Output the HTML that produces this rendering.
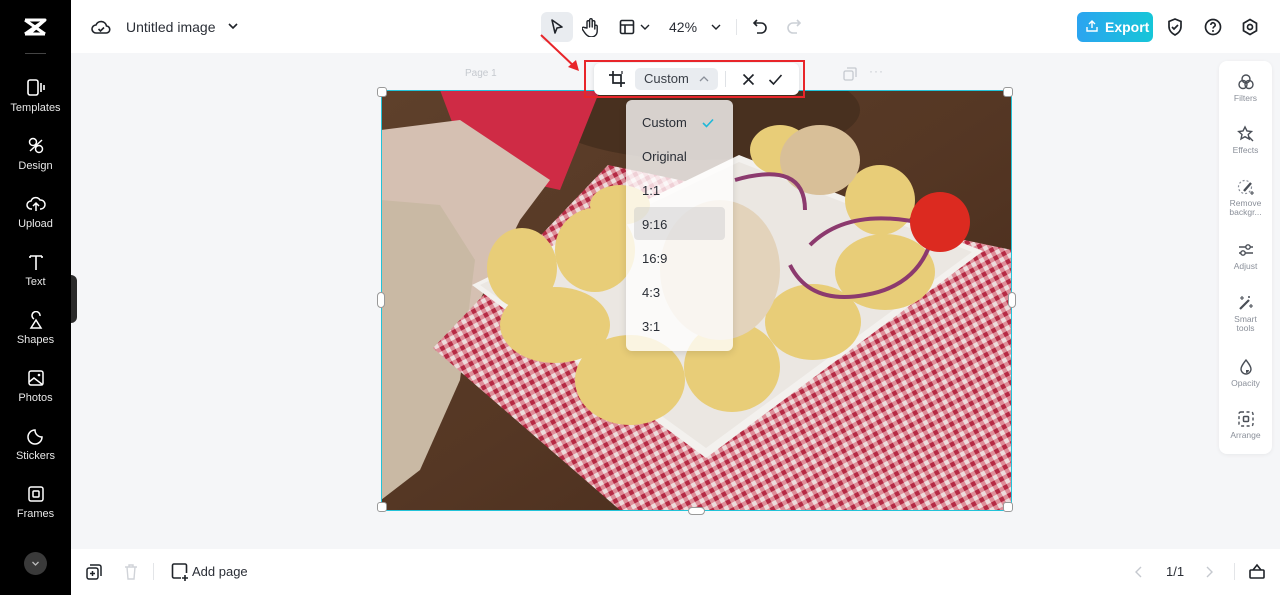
<!DOCTYPE html>
<html><head><meta charset="utf-8">
<style>
*{margin:0;padding:0;box-sizing:border-box}
body{width:1280px;height:595px;overflow:hidden;background:#f5f6f8;font-family:"Liberation Sans",sans-serif;position:relative;color:#1f2329}
.side{position:absolute;left:0;top:0;width:71px;height:595px;background:#000;color:#fff}
.side .it{position:absolute;left:0;width:71px;text-align:center;font-size:11px;color:#e8e8e8}
.side .it svg{display:block;margin:0 auto 5px}
.top{position:absolute;left:71px;top:0;right:0;height:53px;background:#fff}
.bot{position:absolute;left:71px;top:549px;right:0;height:46px;background:#fff}
.rp{position:absolute;left:1219px;top:61px;width:53px;height:393px;background:#fff;border-radius:8px;box-shadow:0 1px 4px rgba(0,0,0,.06)}
.rp .it{position:absolute;left:0;width:53px;text-align:center;font-size:8.5px;color:#8a8f99;line-height:9px}
.rp .it svg{display:block;margin:0 auto 3px}
.dd{position:absolute;left:626px;top:100px;width:107px;height:251px;background:rgba(255,255,255,.78);border-radius:6px;box-shadow:0 2px 8px rgba(0,0,0,.12)}
.dd div{position:absolute;left:16px;font-size:13px;color:#2a2e36}
</style></head><body>

<div class="side">
  <svg style="position:absolute;left:22px;top:17px" width="26" height="20" viewBox="0 0 26 20"><path d="M3 3h20L7 17h16M3 17h4M19 3" fill="none" stroke="#fff" stroke-width="3" stroke-linejoin="round"/><path d="M3 3l10 7 10-7M3 17l10-7 10 7" fill="none" stroke="#fff" stroke-width="3"/></svg>
  <div style="position:absolute;left:25px;top:53px;width:21px;height:1px;background:#444"></div>
  <div class="it" style="top:79px"><svg width="20" height="18" viewBox="0 0 20 18"><rect x="2" y="1" width="10" height="15" rx="2" fill="none" stroke="#fff" stroke-width="1.6"/><path d="M15 4v9M18 6v5" stroke="#fff" stroke-width="1.6"/></svg>Templates</div>
  <div class="it" style="top:137px"><svg width="20" height="18" viewBox="0 0 20 18"><circle cx="7" cy="5" r="3.5" fill="none" stroke="#fff" stroke-width="1.5"/><circle cx="13" cy="12" r="3.5" fill="none" stroke="#fff" stroke-width="1.5"/><path d="M4 14l12-11" stroke="#fff" stroke-width="1.5"/></svg>Design</div>
  <div class="it" style="top:195px"><svg width="20" height="18" viewBox="0 0 20 18"><path d="M6 14H5a4 4 0 010-8 5 5 0 019-1 4 4 0 011 9h-1M10 16V8M7 11l3-3 3 3" fill="none" stroke="#fff" stroke-width="1.5"/></svg>Upload</div>
  <div class="it" style="top:253px"><svg width="20" height="18" viewBox="0 0 20 18"><path d="M4 3h12M10 3v14M4 3v2M16 3v2" fill="none" stroke="#fff" stroke-width="1.6"/></svg>Text</div>
  <div class="it" style="top:311px"><svg width="20" height="18" viewBox="0 0 20 18"><path d="M8 8a4 4 0 116-3M10 9l-5 8h10z" fill="none" stroke="#fff" stroke-width="1.5"/></svg>Shapes</div>
  <div class="it" style="top:369px"><svg width="20" height="18" viewBox="0 0 20 18"><rect x="3" y="2" width="14" height="14" rx="2" fill="none" stroke="#fff" stroke-width="1.5"/><path d="M3 13l5-4 9 7" fill="none" stroke="#fff" stroke-width="1.5"/><circle cx="13" cy="6" r="1.3" fill="#fff"/></svg>Photos</div>
  <div class="it" style="top:427px"><svg width="20" height="18" viewBox="0 0 20 18"><path d="M16 10a7 7 0 11-7-7c0 4 3 7 7 7z" fill="none" stroke="#fff" stroke-width="1.5"/></svg>Stickers</div>
  <div class="it" style="top:485px"><svg width="20" height="18" viewBox="0 0 20 18"><rect x="3" y="2" width="14" height="14" rx="2" fill="none" stroke="#fff" stroke-width="1.5"/><rect x="7" y="6" width="6" height="6" rx="1" fill="none" stroke="#fff" stroke-width="1.5"/></svg>Frames</div>
  <div style="position:absolute;left:24px;top:552px;width:23px;height:23px;border-radius:50%;background:#3a3a3a"><svg width="23" height="23" viewBox="0 0 23 23"><path d="M8.5 10l3 3 3-3" fill="none" stroke="#bbb" stroke-width="1.3"/></svg></div>
  <div style="position:absolute;left:71px;top:275px;width:6px;height:48px;background:#2a2a2a;border-radius:0 6px 6px 0"></div>
</div>

<div class="top">
  <svg style="position:absolute;left:20px;top:18px" width="20" height="18" viewBox="0 0 20 18"><path d="M5 15a4 4 0 010-8 5.5 5.5 0 0110.5 1A3.5 3.5 0 0115 15z" fill="none" stroke="#1f2329" stroke-width="1.6"/><path d="M7.5 11l2 2 3.5-3.5" fill="none" stroke="#1f2329" stroke-width="1.6"/></svg>
  <div style="position:absolute;left:55px;top:19px;font-size:14px;color:#2a2e36">Untitled image</div>
  <svg style="position:absolute;left:157px;top:22px" width="10" height="8" viewBox="0 0 10 8"><path d="M1 2l4 4 4-4" fill="none" stroke="#1f2329" stroke-width="1.6"/></svg>
  <div style="position:absolute;left:470px;top:12px;width:32px;height:30px;background:#e9ecf0;border-radius:6px"></div>
  <svg style="position:absolute;left:478px;top:18px" width="16" height="18" viewBox="0 0 16 18"><path d="M3 2l10 7-5 1-2 5z" fill="none" stroke="#1f2329" stroke-width="1.6" stroke-linejoin="round"/></svg>
  <svg style="position:absolute;left:511px;top:17px" width="18" height="20" viewBox="0 0 18 20"><path d="M5 11V5a1.3 1.3 0 012.6 0v5V3a1.3 1.3 0 012.6 0v7-5a1.3 1.3 0 012.6 0v7-3a1.3 1.3 0 012.4 0v5c0 4-3 6-6 6s-5-2-7-5l-2-3a1.3 1.3 0 012-1.5z" fill="none" stroke="#1f2329" stroke-width="1.4" stroke-linejoin="round"/></svg>
  <svg style="position:absolute;left:548px;top:19px" width="16" height="16" viewBox="0 0 16 16"><rect x="1.5" y="1.5" width="13" height="13" rx="1.5" fill="none" stroke="#1f2329" stroke-width="1.6"/><path d="M1.5 6h13M6 6v8.5" stroke="#1f2329" stroke-width="1.6"/></svg>
  <svg style="position:absolute;left:569px;top:23px" width="10" height="8" viewBox="0 0 10 8"><path d="M1 2l4 4 4-4" fill="none" stroke="#1f2329" stroke-width="1.4"/></svg>
  <div style="position:absolute;left:598px;top:19px;font-size:14px;color:#2a2e36">42%</div>
  <svg style="position:absolute;left:640px;top:23px" width="10" height="8" viewBox="0 0 10 8"><path d="M1 2l4 4 4-4" fill="none" stroke="#1f2329" stroke-width="1.4"/></svg>
  <div style="position:absolute;left:665px;top:19px;width:1px;height:16px;background:#e3e5e8"></div>
  <svg style="position:absolute;left:681px;top:18px" width="16" height="18" viewBox="0 0 16 18"><path d="M5 2L2 5l3 3M2 5h7a5 5 0 010 10H5" fill="none" stroke="#1f2329" stroke-width="1.6"/></svg>
  <svg style="position:absolute;left:715px;top:18px" width="16" height="18" viewBox="0 0 16 18"><path d="M11 2l3 3-3 3M14 5H7a5 5 0 000 10h4" fill="none" stroke="#ccd0d6" stroke-width="1.6"/></svg>
  <div style="position:absolute;left:1006px;top:12px;width:76px;height:30px;border-radius:6px;background:linear-gradient(90deg,#2ba4f0,#16c6d8);color:#fff;font-size:14px;font-weight:bold;line-height:30px;padding-left:28px">Export</div>
  <svg style="position:absolute;left:1014px;top:19px" width="14" height="14" viewBox="0 0 14 14"><path d="M7 9V2M4 5l3-3 3 3M2 8v4h10V8" fill="none" stroke="#fff" stroke-width="1.4"/></svg>
  <svg style="position:absolute;left:1095px;top:17px" width="18" height="20" viewBox="0 0 18 20"><path d="M9 2l6 2.5v5c0 4-3 7-6 8.5-3-1.5-6-4.5-6-8.5v-5z" fill="none" stroke="#1f2329" stroke-width="1.7"/><path d="M6 10l2 2 4-4" fill="none" stroke="#1f2329" stroke-width="1.7"/></svg>
  <svg style="position:absolute;left:1133px;top:18px" width="18" height="18" viewBox="0 0 18 18"><circle cx="9" cy="9" r="7.5" fill="none" stroke="#1f2329" stroke-width="1.7"/><path d="M6.8 7a2.2 2.2 0 114 1.2c-.8.7-1.8 1-1.8 2.3" fill="none" stroke="#1f2329" stroke-width="1.6"/><circle cx="9" cy="13" r="1" fill="#1f2329"/></svg>
  <svg style="position:absolute;left:1170px;top:18px" width="18" height="18" viewBox="0 0 18 18"><path d="M9 1.5l6.5 3.75v7.5L9 16.5l-6.5-3.75v-7.5z" fill="none" stroke="#1f2329" stroke-width="1.7"/><circle cx="9" cy="9" r="2.5" fill="none" stroke="#1f2329" stroke-width="1.7"/></svg>
</div>

<div style="position:absolute;left:465px;top:68px;font-size:10px;color:#c5c9cf">Page 1</div>
<svg style="position:absolute;left:843px;top:67px" width="14" height="14" viewBox="0 0 14 14"><rect x="1" y="4" width="9" height="9" rx="1.5" fill="none" stroke="#c5c9cf" stroke-width="1.3"/><path d="M4 1h8a1 1 0 011 1v8" fill="none" stroke="#c5c9cf" stroke-width="1.3"/></svg>
<div style="position:absolute;left:869px;top:64px;font-size:12px;color:#c5c9cf;letter-spacing:1px">···</div>

<!-- image -->
<svg style="position:absolute;left:381px;top:90px" width="631" height="421" viewBox="381 90 631 421">
  <defs>
    <pattern id="chk" width="9" height="9" patternUnits="userSpaceOnUse" patternTransform="rotate(-28)">
      <rect width="9" height="9" fill="#eddcdc"/><rect width="4.5" height="9" fill="#d45a6c" opacity=".6"/><rect width="9" height="4.5" fill="#d45a6c" opacity=".6"/><rect width="4.5" height="4.5" fill="#b52a44"/>
    </pattern>
    <linearGradient id="wood" x1="0" y1="0" x2="1" y2="1"><stop offset="0" stop-color="#5e402b"/><stop offset=".5" stop-color="#553724"/><stop offset="1" stop-color="#45291a"/></linearGradient>
  </defs>
  <rect x="381" y="90" width="631" height="421" fill="url(#wood)"/>
  <ellipse cx="700" cy="110" rx="160" ry="50" fill="#48301f"/>
  <polygon points="440,90 600,90 560,190 470,170" fill="#cf2b45"/>
  <polygon points="381,130 460,120 550,180 520,220 470,320 440,420 381,470" fill="#d5c0b2"/>
  <polygon points="381,200 440,205 475,260 460,380 420,470 381,500" fill="#c9b9a4"/>
  <polygon points="433,348 608,165 1012,250 1012,511 621,511" fill="url(#chk)"/>
  <polygon points="472,285 739,155 983,251 706,458" fill="#f3f1ee"/>
  <polygon points="480,285 739,162 972,252 706,448" fill="#ebe7e2"/>
  <g fill="#e8cd78">
    <ellipse cx="522" cy="268" rx="35" ry="40"/><ellipse cx="595" cy="250" rx="40" ry="42"/>
    <ellipse cx="555" cy="325" rx="55" ry="38"/><ellipse cx="630" cy="380" rx="55" ry="45"/>
    <ellipse cx="732" cy="367" rx="48" ry="45"/><ellipse cx="813" cy="322" rx="48" ry="38"/>
    <ellipse cx="885" cy="272" rx="50" ry="38"/><ellipse cx="780" cy="150" rx="30" ry="25"/>
    <ellipse cx="880" cy="200" rx="35" ry="35"/><ellipse cx="620" cy="205" rx="30" ry="20"/>
  </g>
  <ellipse cx="820" cy="160" rx="40" ry="35" fill="#d8bf98"/>
  <ellipse cx="720" cy="270" rx="60" ry="70" fill="#e3d3bb"/>
  <g fill="none" stroke="#8c3a6e" stroke-width="4"><path d="M735 180q70-20 70 30"/><path d="M810 245q40-40 120-20"/><path d="M790 265q20 40 75 30 60-10 70-70"/></g>
  <circle cx="940" cy="222" r="30" fill="#dc2a20"/>
</svg>
<div style="position:absolute;left:381px;top:90px;width:631px;height:421px;border:1.5px solid #22c3d9"></div>
<div style="position:absolute;left:377px;top:87px;width:10px;height:10px;background:#fff;border:1px solid #999;border-radius:3px"></div>
<div style="position:absolute;left:1003px;top:87px;width:10px;height:10px;background:#fff;border:1px solid #999;border-radius:3px"></div>
<div style="position:absolute;left:377px;top:502px;width:10px;height:10px;background:#fff;border:1px solid #999;border-radius:3px"></div>
<div style="position:absolute;left:1003px;top:502px;width:10px;height:10px;background:#fff;border:1px solid #999;border-radius:3px"></div>
<div style="position:absolute;left:377px;top:292px;width:8px;height:16px;background:#fff;border:1px solid #999;border-radius:4px"></div>
<div style="position:absolute;left:1008px;top:292px;width:8px;height:16px;background:#fff;border:1px solid #999;border-radius:4px"></div>
<div style="position:absolute;left:688px;top:507px;width:17px;height:8px;background:#fff;border:1px solid #999;border-radius:4px"></div>

<div style="position:absolute;left:594px;top:63px;width:205px;height:32px;background:#fff;border-radius:6px;box-shadow:0 1px 4px rgba(0,0,0,.12)"></div>
<div style="position:absolute;left:584px;top:60px;width:221px;height:38px;border:2px solid #e8252a"></div>
<svg style="position:absolute;left:608px;top:70px" width="18" height="18" viewBox="0 0 18 18"><path d="M5 1v12h12M1 5h12v12" fill="none" stroke="#1f2329" stroke-width="1.7"/><path d="M14 1v3" stroke="#1f2329" stroke-width="1.2"/></svg>
<div style="position:absolute;left:635px;top:68px;width:83px;height:22px;background:#e9ecf0;border-radius:5px;font-size:13px;color:#3a3f47;line-height:22px;padding-left:9px">Custom</div>
<svg style="position:absolute;left:699px;top:75px" width="10" height="8" viewBox="0 0 10 8"><path d="M1 6l4-4 4 4" fill="none" stroke="#8a8f99" stroke-width="1.3"/></svg>
<div style="position:absolute;left:725px;top:71px;width:1px;height:16px;background:#dfe2e6"></div>
<svg style="position:absolute;left:742px;top:73px" width="13" height="13" viewBox="0 0 13 13"><path d="M1.5 1.5l10 10M11.5 1.5l-10 10" stroke="#1f2329" stroke-width="1.6"/></svg>
<svg style="position:absolute;left:768px;top:73px" width="15" height="13" viewBox="0 0 15 13"><path d="M1.5 7l4 4 8-9" fill="none" stroke="#1f2329" stroke-width="1.6"/></svg>
<svg style="position:absolute;left:538px;top:32px" width="46" height="42" viewBox="0 0 46 42"><path d="M3 3l36 34" stroke="#e8252a" stroke-width="2"/><path d="M30 35l11 4-3-11z" fill="#e8252a"/></svg>

<div class="dd">
  <div style="top:15px">Custom</div>
  <svg style="position:absolute;left:76px;top:18px" width="12" height="10" viewBox="0 0 12 10"><path d="M1 5l3.5 3.5L11 1.5" fill="none" stroke="#1fb8d8" stroke-width="1.6"/></svg>
  <div style="top:49px">Original</div>
  <div style="top:83px">1:1</div>
  <span style="position:absolute;left:8px;top:107px;width:91px;height:33px;background:rgba(200,200,200,.45);border-radius:4px"></span>
  <div style="top:117px">9:16</div>
  <div style="top:151px">16:9</div>
  <div style="top:185px">4:3</div>
  <div style="top:219px">3:1</div>
</div>

<div class="rp">
  <div class="it" style="top:12px"><svg width="18" height="18" viewBox="0 0 18 18"><circle cx="9" cy="6" r="4" fill="none" stroke="#4a4f57" stroke-width="1.4"/><circle cx="6" cy="11.5" r="4" fill="none" stroke="#4a4f57" stroke-width="1.4"/><circle cx="12" cy="11.5" r="4" fill="none" stroke="#4a4f57" stroke-width="1.4"/></svg>Filters</div>
  <div class="it" style="top:64px"><svg width="18" height="18" viewBox="0 0 18 18"><path d="M8 2l2 4 4.5.5-3.3 3 1 4.5L8 11.7 4 14l1-4.5-3.3-3L6 6z" fill="none" stroke="#4a4f57" stroke-width="1.4"/><path d="M12 12l4 4" stroke="#4a4f57" stroke-width="1.4"/></svg>Effects</div>
  <div class="it" style="top:117px"><svg width="18" height="18" viewBox="0 0 18 18"><circle cx="8" cy="9" r="6.5" fill="none" stroke="#8a8f99" stroke-width="1.2" stroke-dasharray="2 2"/><path d="M7 13l7-8" stroke="#4a4f57" stroke-width="2.4"/><path d="M15 13v4M13 15h4" stroke="#4a4f57" stroke-width="1.1"/></svg>Remove<br>backgr...</div>
  <div class="it" style="top:180px"><svg width="18" height="18" viewBox="0 0 18 18"><path d="M2 6h14M2 12h14" stroke="#4a4f57" stroke-width="1.4"/><circle cx="11" cy="6" r="2.2" fill="#fff" stroke="#4a4f57" stroke-width="1.4"/><circle cx="6" cy="12" r="2.2" fill="#fff" stroke="#4a4f57" stroke-width="1.4"/></svg>Adjust</div>
  <div class="it" style="top:233px"><svg width="18" height="18" viewBox="0 0 18 18"><path d="M3 15L12 6" stroke="#4a4f57" stroke-width="2.2"/><path d="M5 2v4M3 4h4M14 10v4M12 12h4M12 2v2M11 3h2" stroke="#4a4f57" stroke-width="1.1"/></svg>Smart<br>tools</div>
  <div class="it" style="top:297px"><svg width="18" height="18" viewBox="0 0 18 18"><path d="M9 2c3 4 5 6.5 5 9a5 5 0 01-10 0c0-2.5 2-5 5-9z" fill="none" stroke="#4a4f57" stroke-width="1.4"/><path d="M9 15a3 3 0 003-3H9z" fill="#4a4f57"/></svg>Opacity</div>
  <div class="it" style="top:349px"><svg width="18" height="18" viewBox="0 0 18 18"><rect x="2" y="2" width="14" height="14" rx="2" fill="none" stroke="#4a4f57" stroke-width="1.4" stroke-dasharray="3 2.5"/><rect x="6.5" y="6.5" width="5" height="5" rx="1" fill="none" stroke="#4a4f57" stroke-width="1.5"/></svg>Arrange</div>
</div>

<div class="bot">
  <svg style="position:absolute;left:15px;top:15px" width="16" height="16" viewBox="0 0 16 16"><rect x="1" y="4" width="11" height="11" rx="2" fill="none" stroke="#1f2329" stroke-width="1.5"/><path d="M4 1h9a2 2 0 012 2v9" fill="none" stroke="#1f2329" stroke-width="1.5"/><path d="M6.5 7v5M4 9.5h5" stroke="#1f2329" stroke-width="1.5"/></svg>
  <svg style="position:absolute;left:53px;top:15px" width="14" height="16" viewBox="0 0 14 16"><path d="M1 3h12M5 3V1h4v2M3 3l1 12h6l1-12" fill="none" stroke="#d0d3d8" stroke-width="1.4"/></svg>
  <div style="position:absolute;left:82px;top:14px;width:1px;height:17px;background:#e3e5e8"></div>
  <svg style="position:absolute;left:100px;top:14px" width="18" height="18" viewBox="0 0 18 18"><path d="M10 15H3a1.5 1.5 0 01-1.5-1.5v-11A1.5 1.5 0 013 1h11a1.5 1.5 0 011.5 1.5V10" fill="none" stroke="#1f2329" stroke-width="1.6"/><path d="M14 12v6M11 15h6" stroke="#1f2329" stroke-width="1.6"/></svg>
  <div style="position:absolute;left:121px;top:15px;font-size:13px;color:#2a2e36">Add page</div>
  <svg style="position:absolute;left:1063px;top:16px" width="10" height="14" viewBox="0 0 10 14"><path d="M7 2L2 7l5 5" fill="none" stroke="#c5c9cf" stroke-width="1.4"/></svg>
  <div style="position:absolute;left:1095px;top:15px;font-size:13px;color:#2a2e36">1/1</div>
  <svg style="position:absolute;left:1133px;top:16px" width="10" height="14" viewBox="0 0 10 14"><path d="M3 2l5 5-5 5" fill="none" stroke="#c5c9cf" stroke-width="1.4"/></svg>
  <div style="position:absolute;left:1163px;top:14px;width:1px;height:17px;background:#e3e5e8"></div>
  <svg style="position:absolute;left:1177px;top:13px" width="18" height="18" viewBox="0 0 18 18"><rect x="2" y="8" width="14" height="8" rx="1" fill="none" stroke="#1f2329" stroke-width="1.6"/><path d="M5 8l4-5 4 5" fill="none" stroke="#1f2329" stroke-width="1.6"/></svg>
</div>
</body></html>
